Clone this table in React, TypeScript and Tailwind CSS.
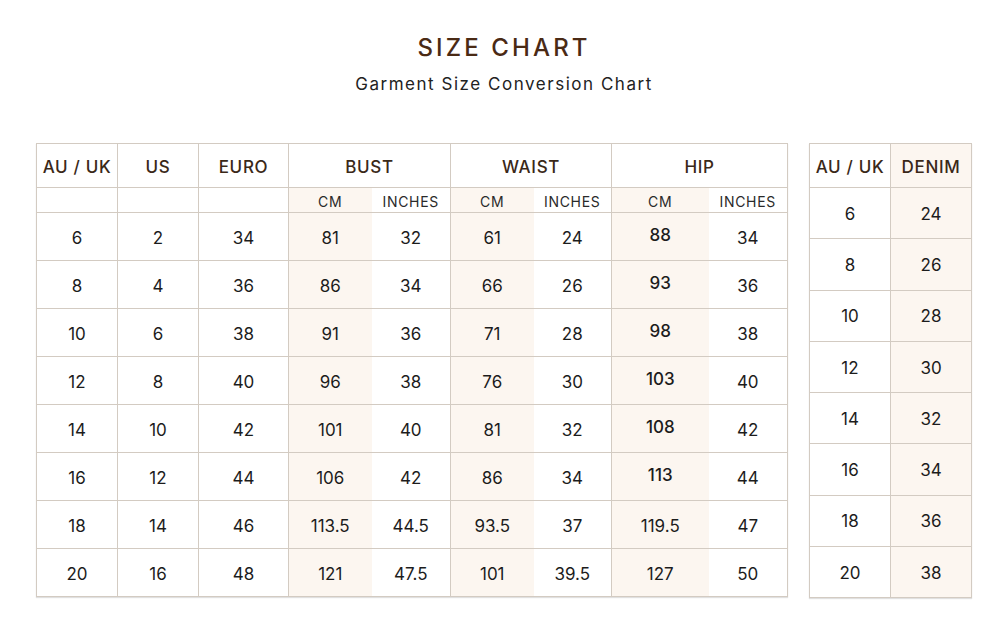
import React from "react";

const rows = [
  ["6", "2", "34", "81", "32", "61", "24", "88", "34"],
  ["8", "4", "36", "86", "34", "66", "26", "93", "36"],
  ["10", "6", "38", "91", "36", "71", "28", "98", "38"],
  ["12", "8", "40", "96", "38", "76", "30", "103", "40"],
  ["14", "10", "42", "101", "40", "81", "32", "108", "42"],
  ["16", "12", "44", "106", "42", "86", "34", "113", "44"],
  ["18", "14", "46", "113.5", "44.5", "93.5", "37", "119.5", "47"],
  ["20", "16", "48", "121", "47.5", "101", "39.5", "127", "50"],
];

const denim = [
  ["6", "24"],
  ["8", "26"],
  ["10", "28"],
  ["12", "30"],
  ["14", "32"],
  ["16", "34"],
  ["18", "36"],
  ["20", "38"],
];

const widths = [81, 81, 90, 83, 79, 83, 78, 97, 79];
const shaded = [false, false, false, true, false, true, false, true, false];

export default function App() {
  const font = { fontFamily: "Inter, 'Liberation Sans', sans-serif" };
  return (
    <div className="w-[1000px] h-[643px] bg-white" style={font}>
      <div className="flex flex-col items-center pl-[8px] pt-[33px]">
        <h1 className="text-[24px] leading-[30px] font-medium tracking-[0.13em] text-[#4a2a15]">
          SIZE CHART
        </h1>
        <p className="mt-[10px] text-[17px] leading-[22px] tracking-[0.09em] text-[#222]">
          Garment Size Conversion Chart
        </p>
      </div>
      <div className="flex pl-[36px] pt-[48px] gap-[21px] items-start">
        <table className="border-collapse border border-[#b9b0a6] shadow-[0_1px_1px_rgba(0,0,0,0.12)] table-fixed">
          <colgroup>
            {widths.map((w, i) => (
              <col key={i} style={{ width: w }} />
            ))}
          </colgroup>
          <thead>
            <tr className="h-[44px]">
              {["AU / UK", "US", "EURO"].map((h) => (
                <th
                  key={h}
                  className="border border-[#d3cbc2] font-medium text-[17px] tracking-[0.04em] text-[#3a2818] pt-[4px]"
                >
                  {h}
                </th>
              ))}
              {["BUST", "WAIST", "HIP"].map((h) => (
                <th
                  key={h}
                  colSpan={2}
                  className="border border-[#d3cbc2] font-medium text-[17px] tracking-[0.04em] text-[#3a2818] pt-[4px]"
                >
                  {h}
                </th>
              ))}
            </tr>
            <tr className="h-[25px]">
              {[0, 1, 2].map((i) => (
                <th key={i} className="border border-[#d3cbc2]" />
              ))}
              {["CM", "INCHES", "CM", "INCHES", "CM", "INCHES"].map((h, i) => (
                <th
                  key={i}
                  className={`border-y border-[#d3cbc2] ${
                    i % 2 === 0 ? "bg-[#fcf6f0] border-l" : "bg-white border-r"
                  } font-normal text-[14px] tracking-[0.05em] text-[#2a2a2a] pt-[3px]`}
                >
                  {h}
                </th>
              ))}
            </tr>
          </thead>
          <tbody>
            {rows.map((r, ri) => (
              <tr key={ri} className="h-[48px]">
                {r.map((v, ci) => {
                  const raised = ci === 7 && ri < 6;
                  return (
                    <td
                      key={ci}
                      className={`border-y border-[#d3cbc2] text-center text-[17px] text-[#1c1c1c] ${
                        shaded[ci] ? "bg-[#fcf6f0]" : "bg-white"
                      } ${ci < 3 || ci % 2 === 1 ? "" : "border-r"} ${
                        ci < 3 ? "border-x" : ci % 2 === 1 ? "border-l" : ""
                      } ${raised ? "font-medium pb-[2px]" : "pt-[5px]"}`}
                    >
                      {v}
                    </td>
                  );
                })}
              </tr>
            ))}
          </tbody>
        </table>

        <table className="border-collapse border border-[#b9b0a6] shadow-[0_1px_1px_rgba(0,0,0,0.12)] table-fixed">
          <colgroup>
            <col style={{ width: 81 }} />
            <col style={{ width: 81 }} />
          </colgroup>
          <thead>
            <tr className="h-[44px]">
              <th className="border border-[#d3cbc2] font-medium text-[17px] tracking-[0.04em] text-[#3a2818] pt-[4px] bg-white">
                AU / UK
              </th>
              <th className="border border-[#d3cbc2] font-medium text-[17px] tracking-[0.04em] text-[#3a2818] pt-[4px] bg-[#fcf6f0]">
                DENIM
              </th>
            </tr>
          </thead>
          <tbody>
            {denim.map((r, ri) => (
              <tr key={ri} className="h-[51.25px]">
                <td className="border border-[#d3cbc2] text-center text-[17px] text-[#1c1c1c] bg-white pt-[3px]">
                  {r[0]}
                </td>
                <td className="border border-[#d3cbc2] text-center text-[17px] text-[#1c1c1c] bg-[#fcf6f0] pt-[3px]">
                  {r[1]}
                </td>
              </tr>
            ))}
          </tbody>
        </table>
      </div>
    </div>
  );
}
